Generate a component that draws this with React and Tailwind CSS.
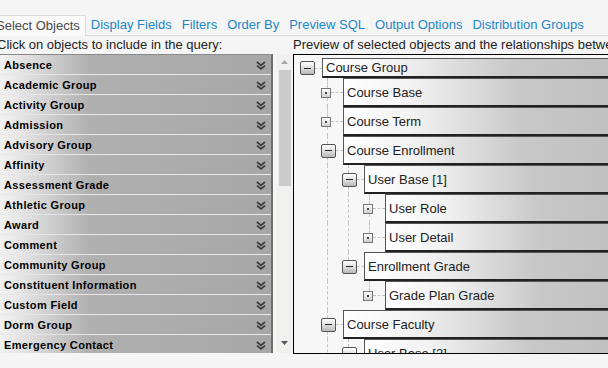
import React from "react";

const tabs = ["Display Fields", "Filters", "Order By", "Preview SQL", "Output Options", "Distribution Groups"];

const objects = [
  "Absence",
  "Academic Group",
  "Activity Group",
  "Admission",
  "Advisory Group",
  "Affinity",
  "Assessment Grade",
  "Athletic Group",
  "Award",
  "Comment",
  "Community Group",
  "Constituent Information",
  "Custom Field",
  "Dorm Group",
  "Emergency Contact",
];

// guides: one flag per ancestor level, true when that ancestor still has siblings below
const tree = [
  { label: "Course Group", kind: "minus", guides: [], next: false, first: true },
  { label: "Course Base", kind: "dot", guides: [false], next: true },
  { label: "Course Term", kind: "dot", guides: [false], next: true },
  { label: "Course Enrollment", kind: "minus", guides: [false], next: true },
  { label: "User Base [1]", kind: "minus", guides: [false, true], next: true },
  { label: "User Role", kind: "dot", guides: [false, true, true], next: true },
  { label: "User Detail", kind: "dot", guides: [false, true, true], next: false },
  { label: "Enrollment Grade", kind: "minus", guides: [false, true], next: false },
  { label: "Grade Plan Grade", kind: "dot", guides: [false, true, false], next: false },
  { label: "Course Faculty", kind: "minus", guides: [false], next: true },
  { label: "User Base [2]", kind: "minus", guides: [false, true], next: true },
];

function Chevron() {
  return (
    <svg width="10" height="9" viewBox="0 0 10 9" className="shrink-0">
      <path d="M1 1l4 3.3L9 1M1 4.6l4 3.3 4-3.3" fill="none" stroke="#3c3c3c" strokeWidth="1.7" />
    </svg>
  );
}

function Toggle({ kind }) {
  if (kind === "minus") {
    return (
      <div className="w-[15px] h-[14px] shrink-0 rounded-[2px] border border-[#555] bg-[linear-gradient(to_bottom,#ffffff,#d8d8d8_60%,#b8b8b8)] flex items-center justify-center">
        <div className="w-[7px] h-px bg-[#222]" />
      </div>
    );
  }
  return (
    <div className="w-[10px] h-[10px] shrink-0 border border-[#777] bg-[linear-gradient(to_bottom,#ffffff,#cfcfcf)] flex items-center justify-center">
      <div className="w-[2px] h-[2px] bg-[#444]" />
    </div>
  );
}

function TreeRow({ node }) {
  return (
    <div className={`flex ${node.first ? "h-[20px] mt-[3px]" : "h-[29px]"}`}>
      {node.guides.map((on, i) => (
        <div key={i} className="w-[21px] shrink-0 flex">
          {on && <div className="ml-[6px] border-l border-dashed border-[#c4c4c4]" />}
        </div>
      ))}
      <div className="w-[22px] shrink-0 flex flex-col">
        <div className="flex-1 flex">
          {!node.first && <div className="ml-[6px] border-l border-dashed border-[#c4c4c4]" />}
        </div>
        <div className="flex items-center">
          <Toggle kind={node.kind} />
          <div className="flex-1 border-t border-dashed border-[#c4c4c4]" />
        </div>
        <div className="flex-1 flex">
          {node.next && <div className="ml-[6px] border-l border-dashed border-[#c4c4c4]" />}
        </div>
      </div>
      <div className="flex-1 min-w-0 flex items-center pl-[3px] pt-px border-t border-l border-[#555] border-b-2 border-b-[#222] bg-[linear-gradient(to_right,#ffffff,#f2f2f2_22%,#c8c8c8_58%,#bcbcbc)] text-[13px] text-[#222] whitespace-nowrap">
        {node.label}
      </div>
    </div>
  );
}

export default function App() {
  return (
    <div className="w-[608px] h-[368px] overflow-hidden bg-[#f5f5f5] font-['Liberation_Sans',Arial,sans-serif] text-[13px]">
      <div className="mt-[15px] h-[21px] flex border-b border-[#dcdcdc] ml-[-11px]">
        <div className="flex items-center pl-[6px] pr-[5px] border border-b-0 border-[#dcdcdc] bg-[#fafafa] text-[#4a4a4a] mb-[-1px] whitespace-nowrap">
          Select Objects
        </div>
        {tabs.map((t) => (
          <div key={t} className="flex items-center px-[5px] text-[#1b87c9] whitespace-nowrap">
            {t}
          </div>
        ))}
      </div>

      <div className="flex">
        <div className="w-[293px] shrink-0">
          <div className="h-[18px] leading-[18px] ml-[-3px] text-[#222] whitespace-nowrap">
            Click on objects to include in the query:
          </div>
          <div className="flex">
            <div className="w-[273px] h-[299px] overflow-hidden border-t border-[#888] border-r-2 border-r-[#6f6f6f]">
              {objects.map((o) => (
                <div
                  key={o}
                  className="h-[20px] flex items-center justify-between pl-[4px] pr-[5px] pt-[2px] border-b border-[#e6e6e6] bg-[linear-gradient(to_right,#f2f2f2,#e0e0e0_10%,#b0b0b0_33%,#a7a7a7)] text-[11px] font-bold tracking-[0.35px] text-black"
                >
                  <span className="whitespace-nowrap">{o}</span>
                  <Chevron />
                </div>
              ))}
            </div>
            <div className="ml-[4px] w-[15px] h-[299px] bg-[#f0f0ee] flex flex-col items-center">
              <div className="h-[16px] flex items-center justify-center">
                <svg width="7" height="4" viewBox="0 0 7 4">
                  <path d="M0 4L3.5 0 7 4z" fill="#a8a8a8" />
                </svg>
              </div>
              <div className="w-[12px] h-[116px] bg-[#cbcbcb]" />
              <div className="flex-1" />
              <div className="h-[20px] flex items-center justify-center">
                <svg width="7" height="4" viewBox="0 0 7 4">
                  <path d="M0 0h7L3.5 4z" fill="#555" />
                </svg>
              </div>
            </div>
          </div>
        </div>

        <div className="flex-1 min-w-0">
          <div className="h-[18px] leading-[18px] text-[#222] whitespace-nowrap">
            Preview of selected objects and the relationships between them:
          </div>
          <div className="w-[360px] h-[300px] overflow-hidden border border-black bg-[#f7f7f7] pl-[6px]">
            {tree.map((n) => (
              <TreeRow key={n.label} node={n} />
            ))}
          </div>
        </div>
      </div>
    </div>
  );
}
